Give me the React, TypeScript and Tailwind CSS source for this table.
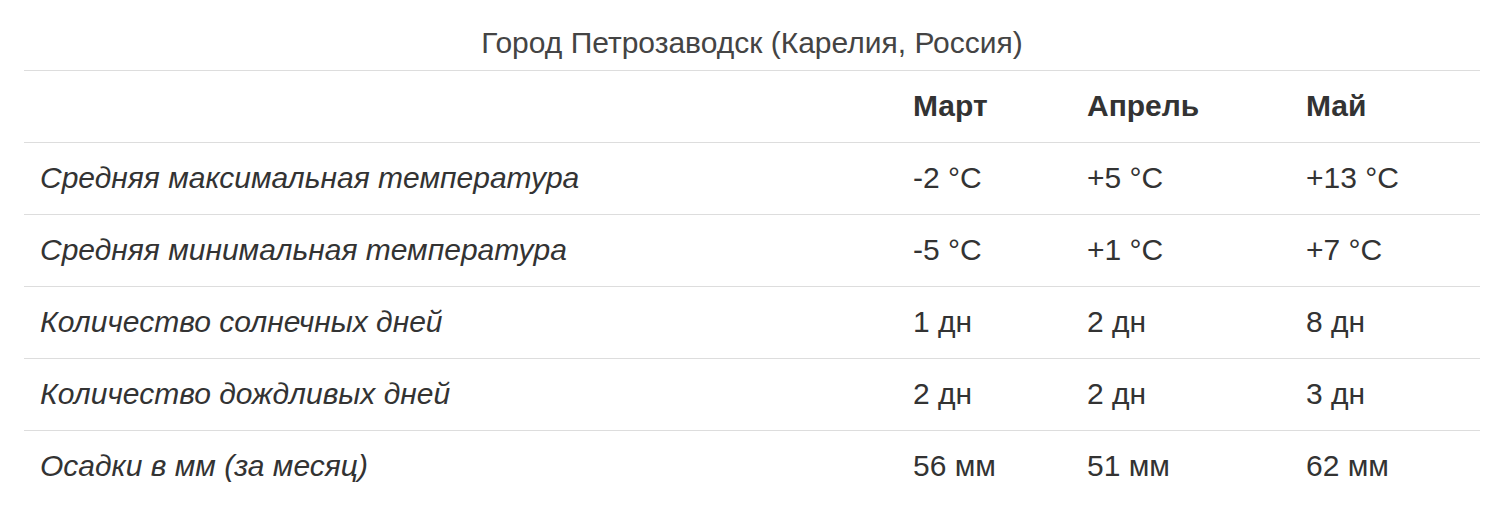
const months = ["Март", "Апрель", "Май"];

const rows = [
  { label: "Средняя максимальная температура", values: ["-2 °C", "+5 °C", "+13 °C"] },
  { label: "Средняя минимальная температура", values: ["-5 °C", "+1 °C", "+7 °C"] },
  { label: "Количество солнечных дней", values: ["1 дн", "2 дн", "8 дн"] },
  { label: "Количество дождливых дней", values: ["2 дн", "2 дн", "3 дн"] },
  { label: "Осадки в мм (за месяц)", values: ["56 мм", "51 мм", "62 мм"] },
];

const App = () => {
  return (
    <div className="min-h-[526px] bg-white px-[24px] font-['Liberation_Sans',Arial,sans-serif] text-[30px] leading-[38px] text-[#333]">
      <div className="w-[1456px]">
        <div className="pt-[24px] pb-[8px] text-center text-[#444]">
          Город Петрозаводск (Карелия, Россия)
        </div>
        <table className="w-full table-fixed border-collapse">
          <colgroup>
            <col className="w-[873px]" />
            <col className="w-[174px]" />
            <col className="w-[219px]" />
            <col className="w-[190px]" />
          </colgroup>
          <thead>
            <tr className="border-t border-[#ddd]">
              <th className="pt-[16px] pb-[17px] px-[16px]"></th>
              {months.map((m) => (
                <th key={m} className="pt-[16px] pb-[17px] px-[16px] text-left font-bold">
                  {m}
                </th>
              ))}
            </tr>
          </thead>
          <tbody>
            {rows.map((r) => (
              <tr key={r.label} className="border-t border-[#ddd]">
                <td className="pt-[16px] pb-[17px] px-[16px] italic">{r.label}</td>
                {r.values.map((v, i) => (
                  <td key={i} className="pt-[16px] pb-[17px] px-[16px]">
                    {v}
                  </td>
                ))}
              </tr>
            ))}
          </tbody>
        </table>
      </div>
    </div>
  );
};

export default App;
